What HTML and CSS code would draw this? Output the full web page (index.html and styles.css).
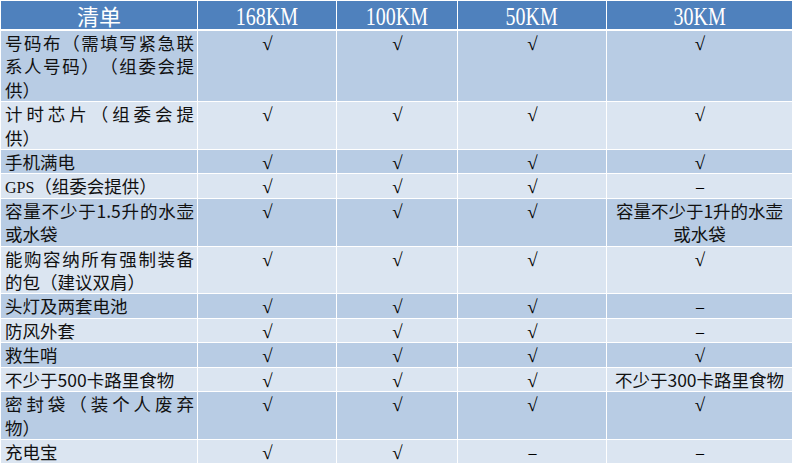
FILE: index.html
```html
<!DOCTYPE html>
<html lang="zh-CN">
<head>
<meta charset="utf-8">
<title>清单</title>
<link rel="stylesheet" href="styles.css">
</head>
<body>
<table class="kit">
  <colgroup>
    <col class="c-item">
    <col class="c-168">
    <col class="c-100">
    <col class="c-50">
    <col class="c-30">
  </colgroup>
  <thead>
    <tr>
      <th><span class="h-cjk">清单</span></th>
      <th><span class="h-lat">168KM</span></th>
      <th><span class="h-lat">100KM</span></th>
      <th><span class="h-lat">50KM</span></th>
      <th><span class="h-lat">30KM</span></th>
    </tr>
  </thead>
  <tbody>
    <tr class="dk">
      <td class="item">号码布（需填写紧急联系人号码）（组委会提供）</td>
      <td class="mk"><span class="ck">√</span></td><td class="mk"><span class="ck">√</span></td><td class="mk"><span class="ck">√</span></td><td class="mk"><span class="ck">√</span></td>
    </tr>
    <tr class="lt">
      <td class="item">计时芯片（组委会提供）</td>
      <td class="mk"><span class="ck">√</span></td><td class="mk"><span class="ck">√</span></td><td class="mk"><span class="ck">√</span></td><td class="mk"><span class="ck">√</span></td>
    </tr>
    <tr class="dk">
      <td class="item">手机满电</td>
      <td class="mk"><span class="ck">√</span></td><td class="mk"><span class="ck">√</span></td><td class="mk"><span class="ck">√</span></td><td class="mk"><span class="ck">√</span></td>
    </tr>
    <tr class="lt">
      <td class="item"><span class="lat">GPS</span>（组委会提供）</td>
      <td class="mk"><span class="ck">√</span></td><td class="mk"><span class="ck">√</span></td><td class="mk"><span class="ck">√</span></td><td class="mk"><span class="dash">–</span></td>
    </tr>
    <tr class="dk">
      <td class="item">容量不少于1.5升的水壶或水袋</td>
      <td class="mk"><span class="ck">√</span></td><td class="mk"><span class="ck">√</span></td><td class="mk"><span class="ck">√</span></td><td class="note">容量不少于1升的水壶或水袋</td>
    </tr>
    <tr class="lt">
      <td class="item">能购容纳所有强制装备的包（建议双肩）</td>
      <td class="mk"><span class="ck">√</span></td><td class="mk"><span class="ck">√</span></td><td class="mk"><span class="ck">√</span></td><td class="mk"><span class="ck">√</span></td>
    </tr>
    <tr class="dk">
      <td class="item">头灯及两套电池</td>
      <td class="mk"><span class="ck">√</span></td><td class="mk"><span class="ck">√</span></td><td class="mk"><span class="ck">√</span></td><td class="mk"><span class="dash">–</span></td>
    </tr>
    <tr class="lt">
      <td class="item">防风外套</td>
      <td class="mk"><span class="ck">√</span></td><td class="mk"><span class="ck">√</span></td><td class="mk"><span class="ck">√</span></td><td class="mk"><span class="dash">–</span></td>
    </tr>
    <tr class="dk">
      <td class="item">救生哨</td>
      <td class="mk"><span class="ck">√</span></td><td class="mk"><span class="ck">√</span></td><td class="mk"><span class="ck">√</span></td><td class="mk"><span class="ck">√</span></td>
    </tr>
    <tr class="lt">
      <td class="item">不少于500卡路里食物</td>
      <td class="mk"><span class="ck">√</span></td><td class="mk"><span class="ck">√</span></td><td class="mk"><span class="ck">√</span></td><td class="note">不少于300卡路里食物</td>
    </tr>
    <tr class="dk">
      <td class="item">密封袋（装个人废弃物）</td>
      <td class="mk"><span class="ck">√</span></td><td class="mk"><span class="ck">√</span></td><td class="mk"><span class="ck">√</span></td><td class="mk"><span class="ck">√</span></td>
    </tr>
    <tr class="lt">
      <td class="item">充电宝</td>
      <td class="mk"><span class="ck">√</span></td><td class="mk"><span class="ck">√</span></td><td class="mk"><span class="dash">–</span></td><td class="mk"><span class="dash">–</span></td>
    </tr>
  </tbody>
</table>
</body>
</html>
```

FILE: styles.css
```css
html, body {
  margin: 0;
  padding: 0;
  background: #fff;
}

.kit {
  border-collapse: separate;
  border-spacing: 1px;
  background: #fff;
  width: 793px;
  table-layout: fixed;
  font-family: "Noto Sans CJK SC", sans-serif;
  font-size: 17.5px;
  color: #111;
  text-spacing-trim: space-all;
}

.c-item { width: 196px; }
.c-168 { width: 138px; }
.c-100 { width: 120px; }
.c-50 { width: 148px; }
.c-30 { width: 185px; }

.kit th {
  background: #4f81bd;
  color: #fff;
  font-weight: normal;
  padding: 1px 0 2px 0;
  line-height: 25px;
  border-bottom: 1px solid #fff;
  text-align: center;
  vertical-align: top;
}

.h-lat {
  display: inline-block;
  vertical-align: top;
  font-family: "Liberation Serif", serif;
  font-size: 25px;
  line-height: 25px;
  padding-top: 2px;
  margin-bottom: -2px;
  transform: scaleX(0.8);
}

.h-cjk {
  display: inline-block;
  vertical-align: top;
  font-family: "Noto Sans CJK SC", sans-serif;
  font-size: 22px;
  line-height: 25px;
  padding-top: 1px;
  margin-bottom: -1px;
}

.kit td {
  padding: 0 3px 0 4px;
  line-height: 23.4px;
  vertical-align: top;
}

.dk td { background: #b8cce4; }
.lt td { background: #dbe5f1; }

.item {
  text-align: justify;
  text-justify: inter-character;
  text-spacing-trim: space-all;
  font-feature-settings: "halt" 0, "chws" 0;
}

.lat {
  font-family: "Liberation Serif", serif;
  font-size: 16px;
  line-height: 1;
}

.mk {
  text-align: center;
}

.ck {
  font-family: "Liberation Serif", serif;
  font-size: 19px;
  line-height: 1;
  color: #000;
}

.dash {
  font-family: "Liberation Serif", serif;
  font-size: 16px;
  line-height: 1;
  color: #000;
  position: relative;
  top: -1px;
}

.kit td.note {
  text-align: center;
  padding: 0 2px;
}
```
